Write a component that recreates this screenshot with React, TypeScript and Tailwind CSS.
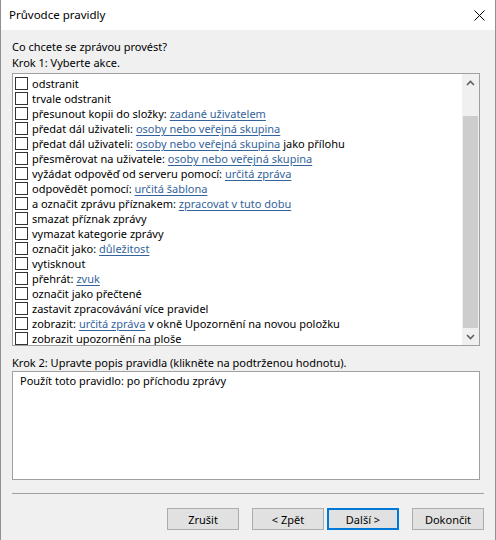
import React from 'react';

type Part = { t: string; link?: boolean };

const akce: Part[][] = [
  [{ t: 'odstranit' }],
  [{ t: 'trvale odstranit' }],
  [{ t: 'přesunout kopii do složky: ' }, { t: 'zadané uživatelem', link: true }],
  [{ t: 'předat dál uživateli: ' }, { t: 'osoby nebo veřejná skupina', link: true }],
  [{ t: 'předat dál uživateli: ' }, { t: 'osoby nebo veřejná skupina', link: true }, { t: ' jako přílohu' }],
  [{ t: 'přesměrovat na uživatele: ' }, { t: 'osoby nebo veřejná skupina', link: true }],
  [{ t: 'vyžádat odpověď od serveru pomocí: ' }, { t: 'určitá zpráva', link: true }],
  [{ t: 'odpovědět pomocí: ' }, { t: 'určitá šablona', link: true }],
  [{ t: 'a označit zprávu příznakem: ' }, { t: 'zpracovat v tuto dobu', link: true }],
  [{ t: 'smazat příznak zprávy' }],
  [{ t: 'vymazat kategorie zprávy' }],
  [{ t: 'označit jako: ' }, { t: 'důležitost', link: true }],
  [{ t: 'vytisknout' }],
  [{ t: 'přehrát: ' }, { t: 'zvuk', link: true }],
  [{ t: 'označit jako přečtené' }],
  [{ t: 'zastavit zpracovávání více pravidel' }],
  [{ t: 'zobrazit: ' }, { t: 'určitá zpráva', link: true }, { t: ' v okně Upozornění na novou položku' }],
  [{ t: 'zobrazit upozornění na ploše' }],
];

function Chevron({ down = false }: { down?: boolean }) {
  return (
    <svg width="9" height="6" viewBox="0 0 9 6">
      <polyline
        points={down ? '1,1 4.5,4.5 8,1' : '1,5 4.5,1.5 8,5'}
        fill="none"
        stroke="#606060"
        strokeWidth="1.6"
      />
    </svg>
  );
}

function Tlacitko({ label, vychozi = false }: { label: string; vychozi?: boolean }) {
  return (
    <button
      className={`w-[72px] h-[22px] bg-[#e1e1e1] text-[11px] leading-none text-black ${
        vychozi ? 'border-2 border-[#0078d7]' : 'border border-[#adadad]'
      }`}
    >
      {label}
    </button>
  );
}

export default function App() {
  return (
    <div
      className="w-[496px] h-[540px] flex flex-col border-x border-[#8f8f8f] bg-[#f0f0f0] text-[11px] text-black"
      style={{ fontFamily: '"Noto Sans", "Open Sans", sans-serif' }}
    >
      {/* Titulek okna */}
      <div className="h-[30px] shrink-0 bg-white flex items-center justify-between pl-[8px] pr-[10px]">
        <span className="text-[11.5px]">Průvodce pravidly</span>
        <svg width="11" height="11" viewBox="0 0 11 11">
          <path d="M0.5 0.5 L10.5 10.5 M10.5 0.5 L0.5 10.5" stroke="#000" strokeWidth="1" />
        </svg>
      </div>

      <div className="flex-1 flex flex-col pl-[11px] pt-[9px]">
        <p className="leading-[16px]">Co chcete se zprávou provést?</p>
        <p className="leading-[16px]">Krok 1: Vyberte akce.</p>

        {/* Seznam akcí */}
        <div className="mt-[2px] w-[468px] h-[273px] border border-[#a0a0a0] bg-white flex">
          <div className="flex-1 overflow-hidden pt-[2px] pl-[2px]">
            {akce.map((parts, i) => (
              <div key={i} className="h-[15px] flex items-center whitespace-nowrap">
                <span className="w-[13px] h-[13px] shrink-0 border border-[#333] bg-white" />
                <span className="ml-[4px] leading-[15px]">
                  {parts.map((p, j) =>
                    p.link ? (
                      <span key={j} className="text-[#34639b] underline underline-offset-2">
                        {p.t}
                      </span>
                    ) : (
                      <span key={j} className="whitespace-pre">{p.t}</span>
                    )
                  )}
                </span>
              </div>
            ))}
          </div>
          <div className="w-[17px] shrink-0 flex flex-col bg-[#f0f0f0]">
            <div className="h-[17px] flex items-center justify-center">
              <Chevron />
            </div>
            <div className="flex-1 flex flex-col px-px pt-[25px]">
              <div className="flex-1 bg-[#cdcdcd]" />
            </div>
            <div className="h-[17px] flex items-center justify-center">
              <Chevron down />
            </div>
          </div>
        </div>

        <p className="mt-[9px] leading-[16px]">
          Krok 2: Upravte popis pravidla (klikněte na podtrženou hodnotu).
        </p>

        {/* Popis pravidla */}
        <div className="w-[468px] h-[109px] border border-[#a0a0a0] bg-white pl-[7px] pt-[1px]">
          <p className="leading-[16px]">Použít toto pravidlo: po příchodu zprávy</p>
        </div>

        <div className="mt-[13px] w-[472px] h-px bg-[#a0a0a0]" />

        <div className="mt-[14px] w-[472px] flex justify-end">
          <Tlacitko label="Zrušit" />
          <div className="w-[13px]" />
          <Tlacitko label="< Zpět" />
          <div className="w-[3px]" />
          <Tlacitko label="Další >" vychozi />
          <div className="w-[13px]" />
          <Tlacitko label="Dokončit" />
        </div>
      </div>
    </div>
  );
}
